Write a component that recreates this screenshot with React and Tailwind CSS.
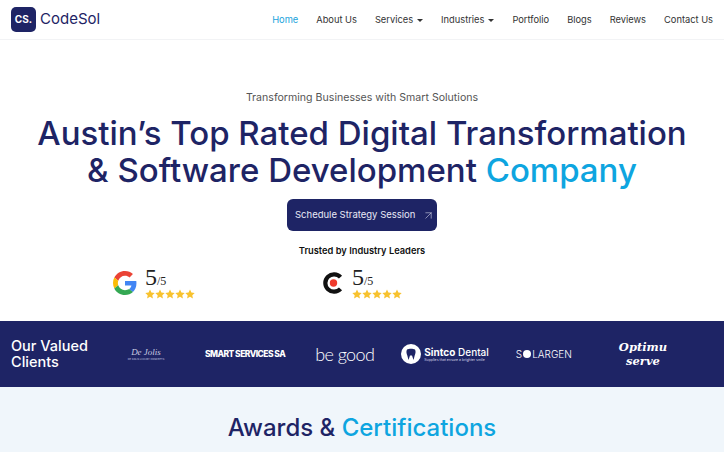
import React from 'react';
import { ArrowUpRight } from 'lucide-react';

const NAV_LINKS = [
  { label: 'Home', active: true },
  { label: 'About Us' },
  { label: 'Services', caret: true },
  { label: 'Industries', caret: true },
  { label: 'Portfolio' },
  { label: 'Blogs' },
  { label: 'Reviews' },
  { label: 'Contact Us' },
];

const Stars = () => (
  <div className="mt-[1px] flex h-[10px] text-[#f8c22e]">
    {[0, 1, 2, 3, 4].map((i) => (
      <svg key={i} width="10" height="10" viewBox="0 0 24 24" fill="currentColor">
        <path d="M12 1l3.4 7.3 7.9 1-5.8 5.5 1.5 7.9L12 18.8l-7 3.9 1.5-7.9L.7 9.3l7.9-1z" />
      </svg>
    ))}
  </div>
);

const GoogleLogo = () => (
  <svg width="24" height="24" viewBox="0 0 48 48">
    <path fill="#EA4335" d="M24 9.5c3.5 0 6.700 1.300 9.100 3.500l6.800-6.800C35.800 2.400 30.300 0 24 0 14.600 0 6.500 5.400 2.600 13.200l7.900 6.100C12.400 13.600 17.700 9.500 24 9.500z" />
    <path fill="#4285F4" d="M46.900 24.500c0-1.600-.1-3.100-.4-4.500H24v9h12.900c-.6 3-2.200 5.500-4.800 7.200l7.700 6c4.500-4.200 7.100-10.300 7.100-17.700z" />
    <path fill="#FBBC05" d="M10.500 28.700c-.5-1.400-.8-3-.8-4.700s.3-3.300.8-4.700l-7.900-6.100C.9 16.500 0 20.100 0 24s.9 7.500 2.600 10.800l7.900-6.100z" />
    <path fill="#34A853" d="M24 48c6.500 0 11.900-2.100 15.900-5.800l-7.700-6c-2.200 1.400-4.900 2.300-8.200 2.300-6.300 0-11.600-4.100-13.500-9.800l-7.900 6.100C6.500 42.600 14.600 48 24 48z" />
  </svg>
);

const ClutchLogo = () => (
  <svg width="22" height="24" viewBox="0 0 22 24">
    <path d="M18.500 17.800A8.700 8.700 0 1 1 18.500 6.200" fill="none" stroke="#111" strokeWidth="4.200" />
    <circle cx="11.500" cy="12" r="3.700" fill="#ef3b2d" />
  </svg>
);

const Rating = ({ logo, className }) => (
  <div className={`flex items-center gap-[8px] ${className}`}>
    {logo}
    <div className="flex flex-col">
      <div className="h-[22px] text-[#222] font-['Liberation_Serif',serif] leading-[22px]">
        <span className="text-[24px] font-medium">5</span>
        <span className="text-[12px]">/5</span>
      </div>
      <Stars />
    </div>
  </div>
);

export default function App() {
  return (
    <div className="h-[452px] w-[724px] overflow-hidden bg-white font-['Inter',sans-serif]">
      {/* Header */}
      <header className="flex h-[40px] items-center justify-between border-b border-[#f2f3f5] pl-[11px] pr-[11px]">
        <div className="flex items-center gap-[4px]">
          <div className="flex h-[25px] w-[25px] items-center justify-center rounded-[5px] bg-[#1e2465] text-[10px] font-bold text-white">
            CS.
          </div>
          <span className="text-[15px] text-[#1e2465]">CodeSol</span>
        </div>
        <nav className="flex items-center gap-[18px] text-[9.300px] text-[#333]">
          {NAV_LINKS.map((link) => (
            <span key={link.label} className={`flex items-center gap-[4px] ${link.active ? 'text-[#1ba3dc]' : ''}`}>
              {link.label}
              {link.caret && <span className="mt-[2px] border-x-[3px] border-t-[3px] border-x-transparent border-t-[#333]" />}
            </span>
          ))}
        </nav>
      </header>

      {/* Hero */}
      <section className="flex h-[281px] flex-col items-center pt-[50px]">
        <p className="text-[10.600px] leading-[16px] text-[#555]">Transforming Businesses with Smart Solutions</p>
        <h1 className="mt-[9px] text-center text-[33px] font-medium leading-[37px] text-[#1e2465]">
          Austin’s Top Rated Digital Transformation
          <br />
          &amp; Software Development <span className="text-[#0ea5e0]">Company</span>
        </h1>
        <button className="mt-[10px] flex h-[32px] w-[150px] items-center gap-[7px] rounded-[6px] bg-[#1e2465] pl-[8px] text-[9.500px] text-[#e8e9f5]">
          Schedule Strategy Session
          <ArrowUpRight size={13} strokeWidth={1} />
        </button>
        <p className="mt-[14px] text-[9.300px] leading-[12px] font-semibold text-[#111]">Trusted by Industry Leaders</p>
        <div className="mt-[9px] flex w-full pl-[113px]">
          <Rating logo={<GoogleLogo />} className="w-[209px]" />
          <Rating logo={<ClutchLogo />} />
        </div>
      </section>

      {/* Clients strip */}
      <section className="flex h-[66px] items-center bg-[#1e2465] text-white">
        <h2 className="ml-[11px] w-[100px] text-[14.500px] font-medium leading-[16px]">
          Our Valued
          <br />
          Clients
        </h2>
        <div className="ml-[19px] flex w-[32px] flex-col items-center text-[#c9cbe0]">
          <span className="font-['Liberation_Serif',serif] text-[9px] leading-[11px] italic">De Jolis</span>
          <span className="text-[2.500px] leading-[4px] whitespace-nowrap">DE SOLIS LUXURY CONCEPTS</span>
        </div>
        <span className="ml-[43px] text-[8.500px] font-extrabold tracking-[-0.55px] whitespace-nowrap">SMART SERVICES SA</span>
        <span className="ml-[30px] font-['Lato',sans-serif] text-[18px] font-light tracking-[-0.6px] whitespace-nowrap">be good</span>
        <div className="ml-[27px] flex items-center gap-[3px]">
          <div className="flex h-[20px] w-[20px] items-center justify-center rounded-full bg-white">
            <svg width="12" height="13" viewBox="0 0 12 13">
              <path d="M2 1.500C4 .5 8 .5 10 1.500c1 2 .5 4-.3 6L8.500 12 7 7.500H5L3.500 12 2.300 7.500C1.500 5.500 1 3.500 2 1.500z" fill="#1e2465" />
            </svg>
          </div>
          <div className="flex flex-col">
            <span className="text-[10px] leading-[11px] font-medium whitespace-nowrap">
              <b className="font-bold">Sintco</b> Dental
            </span>
            <span className="text-[3.500px] leading-[4px] whitespace-nowrap text-[#d8d9ea]">Supplies that ensure a brighter smile</span>
          </div>
        </div>
        <div className="ml-[27px] flex items-center font-['Inter',sans-serif] text-[10px] font-light whitespace-nowrap">
          S
          <span className="mx-[1px] h-[8px] w-[8px] rounded-full bg-white" />
          LARGEN
        </div>
        <div className="ml-[47px] flex flex-col items-center font-['DejaVu_Serif',serif] text-[11.500px] leading-[14px] font-bold italic">
          <span>Optimu</span>
          <span>serve</span>
        </div>
      </section>

      {/* Awards */}
      <section className="flex h-[65px] justify-center bg-[#f0f6fb] pt-[26px]">
        <h2 className="text-[24px] font-medium leading-[30px] text-[#1e2465]">
          Awards &amp; <span className="text-[#0ea5e0]">Certifications</span>
        </h2>
      </section>
    </div>
  );
}
